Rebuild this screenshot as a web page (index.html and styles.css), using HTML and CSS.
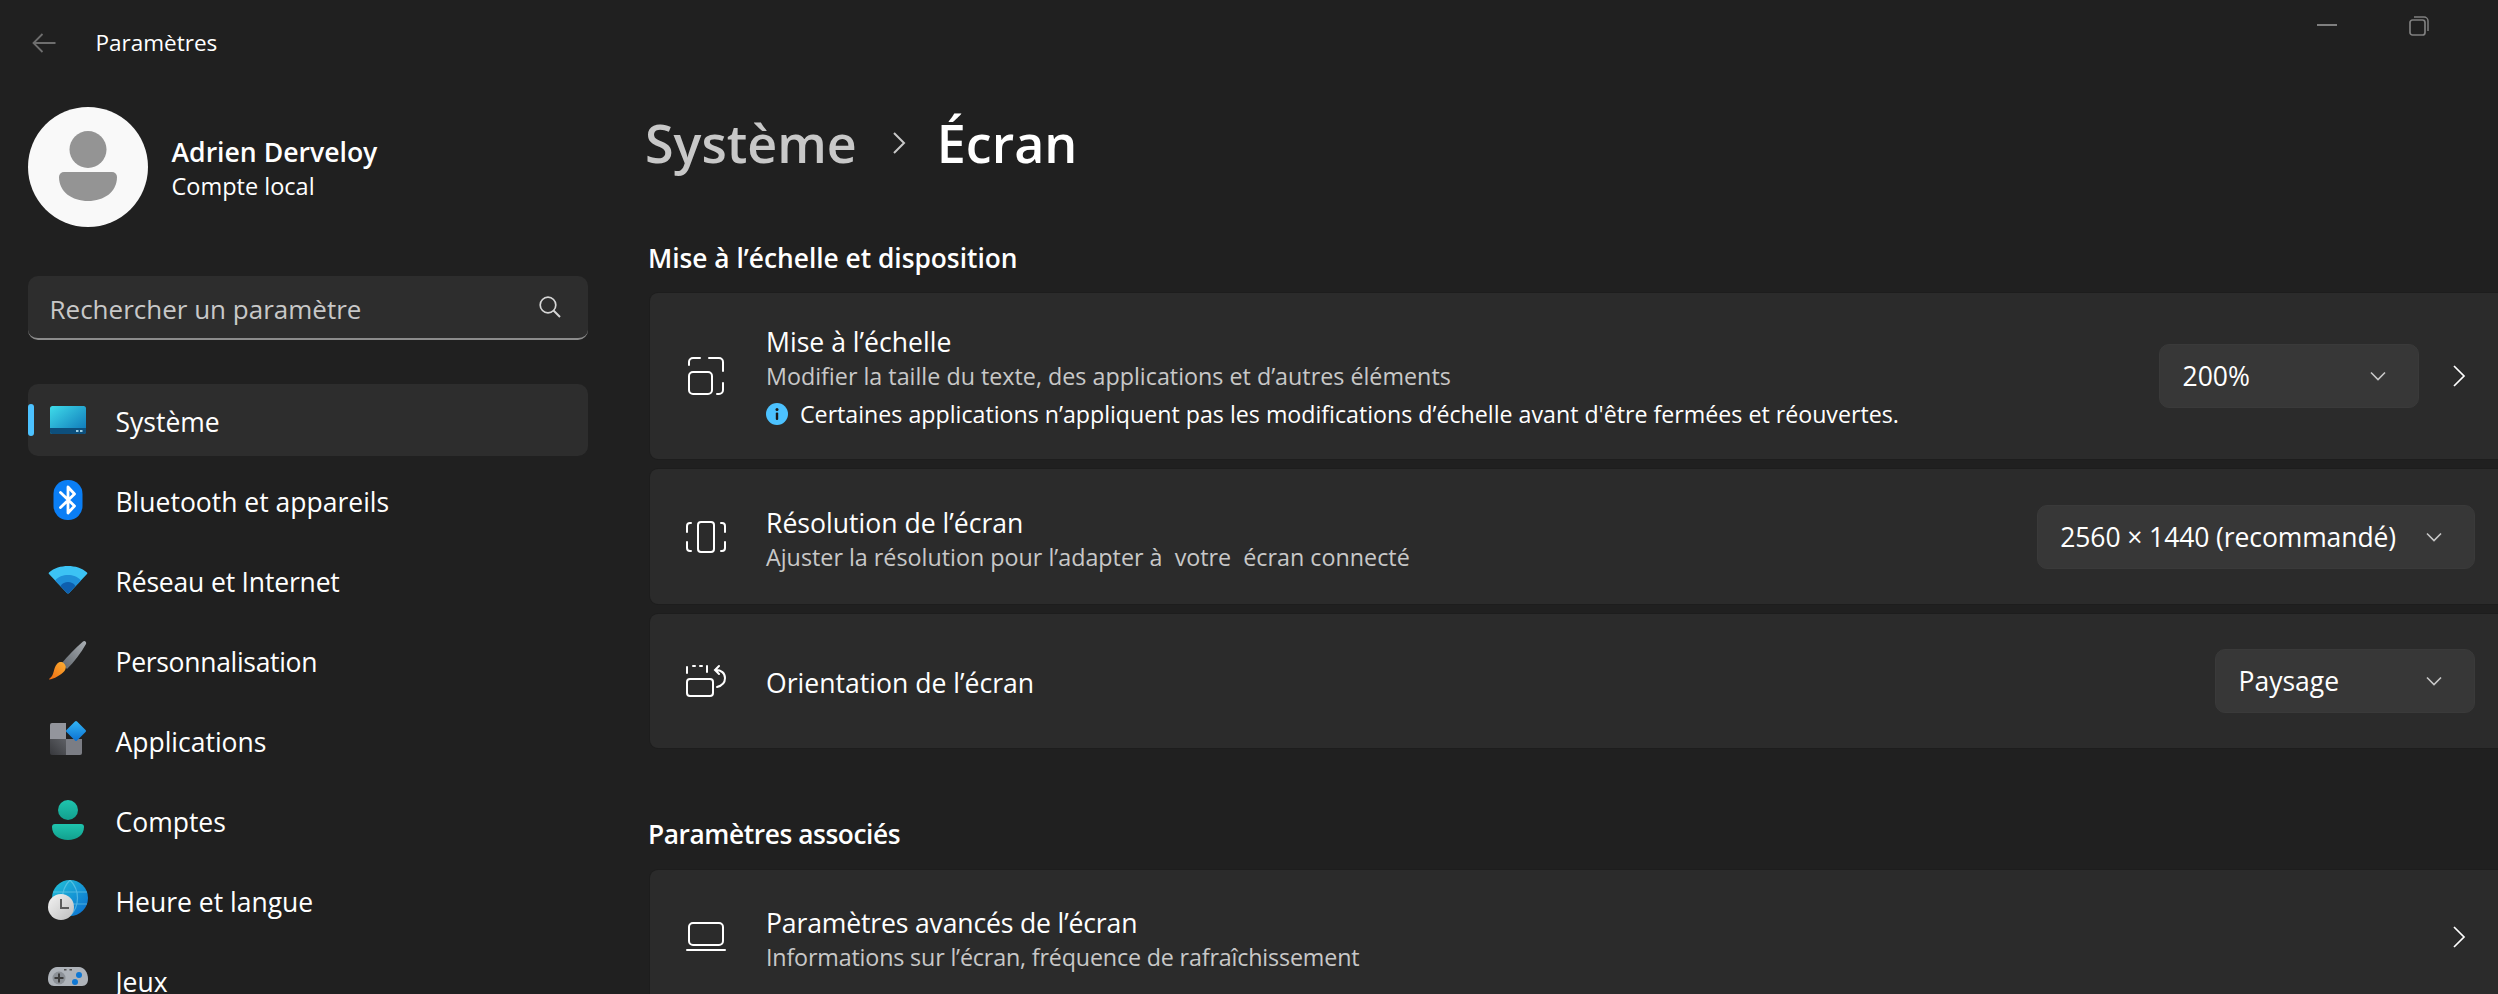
FILE: index.html
```html
<!DOCTYPE html>
<html lang="fr">
<head>
<meta charset="utf-8">
<title>Paramètres</title>
<link rel="stylesheet" href="styles.css">
</head>
<body>
<div class="window">
  <aside class="sidebar">
    <div class="titlebar">
      <svg class="back" viewBox="0 0 24 20" width="24" height="20"><path d="M23.5 10H1.5M10.5 1 1.5 10l9 9" fill="none" stroke="#6e6e6e" stroke-width="1.8"/></svg>
      <span class="app-name">Paramètres</span>
    </div>
    <div class="profile">
      <svg class="avatar" viewBox="0 0 120 120" width="120" height="120"><circle cx="60" cy="60" r="60" fill="#f9f9f9"/><circle cx="60" cy="42.500" r="18.500" fill="#949494"/><path d="M31 70a5 5 0 0 1 5-5h48a5 5 0 0 1 5 5c0 15-13 24-29 24S31 85 31 70z" fill="#949494"/></svg>
      <div class="profile-text">
        <div class="profile-name">Adrien Derveloy</div>
        <div class="profile-sub">Compte local</div>
      </div>
    </div>
    <div class="search">
      <span class="search-text">Rechercher un paramètre</span>
      <svg viewBox="0 0 22 22" width="22" height="22"><circle cx="9" cy="9" r="7.800" fill="none" stroke="#d6d6d6" stroke-width="1.700"/><path d="M14.500 14.500 21 21" stroke="#d6d6d6" stroke-width="1.900"/></svg>
    </div>
    <nav class="nav">
      <div class="nav-item active">
        <span class="accent"></span>
        <svg class="nav-icon" viewBox="0 0 40 40"><defs><linearGradient id="g1" x1="0" y1="0" x2="1" y2="1"><stop offset="0" stop-color="#3fdcea"/><stop offset="1" stop-color="#0c72b6"/></linearGradient></defs><rect x="2" y="6" width="36" height="28" rx="2.500" fill="url(#g1)"/><path d="M2 28h36v3.500a2.500 2.500 0 0 1-2.500 2.500h-31A2.500 2.500 0 0 1 2 31.500z" fill="#0d4f7c"/><rect x="28" y="30" width="2.500" height="2" fill="#9fd0e6"/><rect x="32" y="30" width="2.500" height="2" fill="#9fd0e6"/></svg>
        <span class="nav-label">Système</span>
      </div>
      <div class="nav-item">
        <svg class="nav-icon" viewBox="0 0 40 40"><rect x="5.500" y="0" width="29" height="40" rx="14" fill="#0a7ef5"/><path d="M12.500 12.500 26.500 26 20 33V7l6.500 7L12.500 27.500" fill="none" stroke="#fff" stroke-width="2.800" stroke-linejoin="round" stroke-linecap="round"/></svg>
        <span class="nav-label">Bluetooth et appareils</span>
      </div>
      <div class="nav-item">
        <svg class="nav-icon" viewBox="0 0 40 40"><path d="M1 12.500C6 8 13 6 20 6s14 2 19 6.500a1 1 0 0 1 0 1.500L21 33a1.500 1.500 0 0 1-2 0L1 14a1 1 0 0 1 0-1.500z" fill="#3cc3f4"/><path d="M7 20.500C10.500 16.500 15 15 20 15s9.500 1.500 13 5.500L21 33a1.500 1.500 0 0 1-2 0z" fill="#1f90d8"/><path d="M12.500 26c2-3 4.500-4 7.500-4s5.500 1 7.500 4L21 33a1.500 1.500 0 0 1-2 0z" fill="#0e5fae"/></svg>
        <span class="nav-label tight">Réseau et Internet</span>
      </div>
      <div class="nav-item">
        <svg class="nav-icon" viewBox="0 0 40 40"><defs><linearGradient id="g2" x1="1" y1="0" x2="0" y2="1"><stop offset="0" stop-color="#a9aeb3"/><stop offset="1" stop-color="#5f656b"/></linearGradient><linearGradient id="g3" x1="1" y1="0" x2="0" y2="1"><stop offset="0" stop-color="#fbb034"/><stop offset="1" stop-color="#ee6a10"/></linearGradient></defs><path d="M35 1.500c1.500-1.500 4 .5 3 2.500C33 13 26 22 19 29l-5.500-5.500C20 16 27 8 35 1.500z" fill="url(#g2)"/><path d="M9 24c2-2.500 5-2.500 7-.500s2.500 5 .5 7.500c-3.500 4-10.500 8-15.500 8.500 0-1 1.500-1.500 3-3.500 2-3 2-9 5-12z" fill="url(#g3)"/></svg>
        <span class="nav-label tighter">Personnalisation</span>
      </div>
      <div class="nav-item">
        <svg class="nav-icon" viewBox="0 0 40 40"><defs><linearGradient id="g4" x1="0" y1="0" x2="1" y2="1"><stop offset="0" stop-color="#34b6f5"/><stop offset="1" stop-color="#0a6fd0"/></linearGradient><linearGradient id="g5" x1="1" y1="0" x2="0" y2="1"><stop offset="0" stop-color="#5e6065"/><stop offset="1" stop-color="#37383c"/></linearGradient></defs><path d="M2 5a2 2 0 0 1 2-2h14v16H2z" fill="#93959c"/><path d="M2 19h16v16H4a2 2 0 0 1-2-2z" fill="url(#g5)"/><path d="M18 19h16v14a2 2 0 0 1-2 2H18z" fill="#7b7d84"/><rect x="20.500" y="3.500" width="15" height="15" rx="1.500" transform="rotate(45 28 11)" fill="url(#g4)"/></svg>
        <span class="nav-label">Applications</span>
      </div>
      <div class="nav-item">
        <svg class="nav-icon" viewBox="0 0 40 40"><defs><linearGradient id="g6" x1="0" y1="0" x2="0" y2="1"><stop offset="0" stop-color="#1fc4ae"/><stop offset="1" stop-color="#12a08e"/></linearGradient></defs><circle cx="20" cy="10" r="10" fill="url(#g6)"/><path d="M4 27a3 3 0 0 1 3-3h26a3 3 0 0 1 3 3c0 8-7 13-16 13S4 35 4 27z" fill="url(#g6)"/></svg>
        <span class="nav-label">Comptes</span>
      </div>
      <div class="nav-item">
        <svg class="nav-icon" viewBox="0 0 40 40"><defs><linearGradient id="g7" x1="0" y1="0" x2="1" y2="1"><stop offset="0" stop-color="#22c3d8"/><stop offset="1" stop-color="#0a6cd0"/></linearGradient><linearGradient id="g8" x1="0" y1="0" x2="1" y2="1"><stop offset="0" stop-color="#f4f4f4"/><stop offset="1" stop-color="#bdbdbd"/></linearGradient></defs><circle cx="22" cy="18" r="18" fill="url(#g7)"/><path d="M5 12h34M5 24h34M22 0c-10 10-10 26 0 36M22 0c10 10 10 26 0 36" fill="none" stroke="#7fd4ec" stroke-opacity=".55" stroke-width="1.200"/><circle cx="13" cy="27" r="13" fill="url(#g8)"/><path d="M13 19v9h8" fill="none" stroke="#5c5c5c" stroke-width="2"/></svg>
        <span class="nav-label">Heure et langue</span>
      </div>
      <div class="nav-item">
        <svg class="nav-icon" viewBox="0 0 40 40"><path d="M9 7h22c5 0 9 5 9 12 0 4-2 7-6 7H6c-4 0-6-3-6-7C0 12 4 7 9 7z" fill="#aeb3b9"/><rect x="16" y="9" width="2.500" height="1.500" fill="#4e4e4e"/><rect x="21.500" y="9" width="2.500" height="1.500" fill="#4e4e4e"/><circle cx="11" cy="18" r="6.500" fill="#8c9197"/><path d="M11 13.500v9M6.500 18h9" stroke="#3b3b3b" stroke-width="2"/><circle cx="31" cy="15" r="3" fill="#0f78d4"/><circle cx="27" cy="22" r="3" fill="#0f78d4"/></svg>
        <span class="nav-label">Jeux</span>
      </div>
    </nav>
  </aside>

  <main class="main">
    <div class="window-controls">
      <svg viewBox="0 0 20 20" width="20" height="20"><path d="M0 9h20" stroke="#7f7f7f" stroke-width="2"/></svg>
      <svg viewBox="0 0 20 20" width="20" height="20"><rect x="1" y="4" width="15" height="15" rx="2.500" fill="none" stroke="#7f7f7f" stroke-width="1.700"/><path d="M5 1h10a4 4 0 0 1 4 4v10" fill="none" stroke="#7f7f7f" stroke-width="1.500"/></svg>
    </div>
    <div class="breadcrumb">
      <span class="crumb-parent">Système</span>
      <svg class="crumb-sep" viewBox="0 0 14 22" width="14" height="22"><path d="M2 1l10 10L2 21" fill="none" stroke="#c8c8c8" stroke-width="2"/></svg>
      <span class="crumb-current">Écran</span>
    </div>
    <h2 class="section-title first">Mise à l’échelle et disposition</h2>
    <div class="cards">
      <div class="card tall">
        <svg class="card-icon" viewBox="0 0 40 40" width="40" height="40"><g fill="none" stroke="#fff" stroke-width="2" stroke-linecap="round"><rect x="3" y="16" width="23" height="22" rx="4"/><path d="M3 9V6a4 4 0 0 1 4-4h7M23 2h10a4 4 0 0 1 4 4v9M37 27v7a4 4 0 0 1-4 4h-2"/></g></svg>
        <div class="card-text">
          <div class="card-title">Mise à l’échelle</div>
          <div class="card-sub">Modifier la taille du texte, des applications et d’autres éléments</div>
          <div class="card-info">
            <svg viewBox="0 0 22 22" width="22" height="22"><circle cx="11" cy="11" r="11" fill="#4cc2ff"/><circle cx="11" cy="6.500" r="1.500" fill="#1a1a1a"/><rect x="9.800" y="9.500" width="2.400" height="7.500" rx="1" fill="#1a1a1a"/></svg>
            <span>Certaines applications n’appliquent pas les modifications d’échelle avant d'être fermées et réouvertes.</span>
          </div>
        </div>
        <div class="select narrow"><span>200%</span><svg class="chev-down" viewBox="0 0 16 10" width="16" height="10"><path d="M1 1.500l7 7 7-7" fill="none" stroke="#c8c8c8" stroke-width="1.600"/></svg></div>
        <svg class="chev-right" viewBox="0 0 12 22" width="22" height="22" preserveAspectRatio="xMinYMid"><path d="M1 1l10 10L1 21" fill="none" stroke="#fff" stroke-width="1.700"/></svg>
      </div>
      <div class="card mid">
        <svg class="card-icon" viewBox="0 0 40 40" width="40" height="40"><g fill="none" stroke="#fff" stroke-width="2" stroke-linecap="round"><rect x="12" y="5" width="16" height="30" rx="3"/><path d="M5 6H4a3 3 0 0 0-3 3v6M5 34H4a3 3 0 0 1-3-3v-6M35 6h1a3 3 0 0 1 3 3v6M35 34h1a3 3 0 0 0 3-3v-6"/></g></svg>
        <div class="card-text">
          <div class="card-title">Résolution de l’écran</div>
          <div class="card-sub">Ajuster la résolution pour l’adapter à  votre  écran connecté</div>
        </div>
        <div class="select wide"><span>2560 × 1440 (recommandé)</span><svg class="chev-down" viewBox="0 0 16 10" width="16" height="10"><path d="M1 1.500l7 7 7-7" fill="none" stroke="#c8c8c8" stroke-width="1.600"/></svg></div>
      </div>
      <div class="card">
        <svg class="card-icon" viewBox="0 0 40 40" width="40" height="40"><g fill="none" stroke="#fff" stroke-width="2" stroke-linecap="round"><rect x="1" y="18" width="26" height="17" rx="3"/><path d="M1 12V6M7 5h2M14 5h2M21 5v6"/><path d="M30 9c5 0 9 3 9 8s-4 8-8 9M33 5l-4 4 4 4"/></g></svg>
        <div class="card-text">
          <div class="card-title">Orientation de l’écran</div>
        </div>
        <div class="select narrow"><span>Paysage</span><svg class="chev-down" viewBox="0 0 16 10" width="16" height="10"><path d="M1 1.500l7 7 7-7" fill="none" stroke="#c8c8c8" stroke-width="1.600"/></svg></div>
      </div>
    </div>
    <h2 class="section-title second">Paramètres associés</h2>
    <div class="cards">
      <div class="card">
        <svg class="card-icon" viewBox="0 0 40 40" width="40" height="40"><g fill="none" stroke="#fff" stroke-width="2" stroke-linecap="round"><rect x="3" y="6" width="34" height="22" rx="4"/><path d="M1 33h38"/></g></svg>
        <div class="card-text">
          <div class="card-title tight">Paramètres avancés de l’écran</div>
          <div class="card-sub tight">Informations sur l’écran, fréquence de rafraîchissement</div>
        </div>
        <svg class="chev-right solo" viewBox="0 0 12 22" width="22" height="22" preserveAspectRatio="xMinYMid"><path d="M1 1l10 10L1 21" fill="none" stroke="#fff" stroke-width="1.700"/></svg>
      </div>
    </div>
  </main>
</div>
</body>
</html>
```
FILE: styles.css
```css
* { box-sizing: border-box; }
html, body { margin: 0; padding: 0; background: #202020; }
body { width: 2498px; height: 994px; overflow: hidden; font-family: "Open Sans", "Noto Sans", sans-serif; color: #fff; }
.window { display: grid; grid-template-columns: 620px 1fr; width: 2498px; height: 994px; overflow: hidden; }
.tight { letter-spacing: -0.17px; }
.tighter { letter-spacing: -0.3px; }

.sidebar { padding: 26px 32px 0 28px; min-width: 0; }
.titlebar { display: flex; align-items: center; height: 34px; padding-left: 4px; }
.back { flex: none; }
.app-name { margin-left: 39.5px; font-size: 22.5px; line-height: 32px; }

.profile { display: flex; align-items: center; margin-top: 47px; }
.avatar { flex: none; }
.profile-text { margin-left: 23.5px; padding-top: 3px; }
.profile-name { font-size: 26.6px; line-height: 36px; font-weight: 600; }
.profile-sub { font-size: 23.5px; line-height: 33px; }

.search { display: flex; align-items: center; justify-content: space-between; height: 64px; margin-top: 49px; padding: 0 27px 0 21.5px; background: #2d2d2d; border-bottom: 2px solid #8c8c8c; border-radius: 10px; }
.search-text { padding-top: 3px; font-size: 26px; line-height: 36px; color: #c8c8c8; }

.nav { display: flex; flex-direction: column; gap: 8px; margin-top: 44px; }
.nav-item { position: relative; display: flex; align-items: center; height: 72px; padding-left: 20px; border-radius: 10px; }
.nav-item.active { background: #2d2d2d; }
.accent { position: absolute; left: 0; top: 20px; width: 6px; height: 32px; border-radius: 3px; background: #4cc2ff; }
.nav-icon { flex: none; width: 40px; height: 40px; }
.nav-label { margin-left: 27.5px; padding-top: 3px; font-size: 26.5px; line-height: 36px; }

.main { padding-left: 30px; min-width: 0; }
.window-controls { display: flex; justify-content: flex-end; gap: 72px; height: 107px; padding: 16px 69px 0 0; }
.breadcrumb { display: flex; align-items: center; gap: 32px; height: 72px; margin-left: -5px; }
.crumb-sep { margin: 0 -1px 0 3px; }
.crumb-parent, .crumb-current { font-size: 52px; line-height: 72px; font-weight: 600; }
.crumb-parent { color: #c8c8c8; }

.section-title { margin: 0; font-size: 26.3px; line-height: 36px; font-weight: 600; margin-left: -2px; }
.section-title.first { margin-top: 61px; margin-bottom: 17px; }
.section-title.second { margin-top: 68px; margin-bottom: 18px; letter-spacing: -0.42px; }

.cards { display: flex; flex-direction: column; gap: 10px; width: 1860px; }
.card { display: flex; align-items: center; height: 134px; padding: 0 35px 0 36px; background: #2b2b2b; border-radius: 8px; box-shadow: 0 0 0 1px #1d1d1d; }
.card.tall { height: 166px; }
.card.mid { height: 135px; }
.card-icon { flex: none; }
.card-text { margin-left: 40px; padding-top: 4px; }
.card-title { font-size: 26.6px; line-height: 36px; }
.card-sub { font-size: 23.3px; line-height: 32px; color: #c8c8c8; white-space: pre; }
.card-info { display: flex; align-items: center; gap: 12px; margin-top: 6px; padding-bottom: 2px; font-size: 23.2px; line-height: 32px; }
.card-info svg { flex: none; }

.select { display: flex; align-items: center; justify-content: space-between; gap: 30px; height: 64px; margin-left: auto; padding: 0 32px 0 22.5px; background: #373737; border: 1px solid #3a3a3a; border-radius: 10px; font-size: 26.5px; line-height: 36px; }
.select.narrow { width: 260px; }
.select.wide { letter-spacing: -0.1px; }
.chev-down { flex: none; }
.chev-right { flex: none; margin-left: 34px; }
.chev-right.solo { margin-left: auto; }
```
